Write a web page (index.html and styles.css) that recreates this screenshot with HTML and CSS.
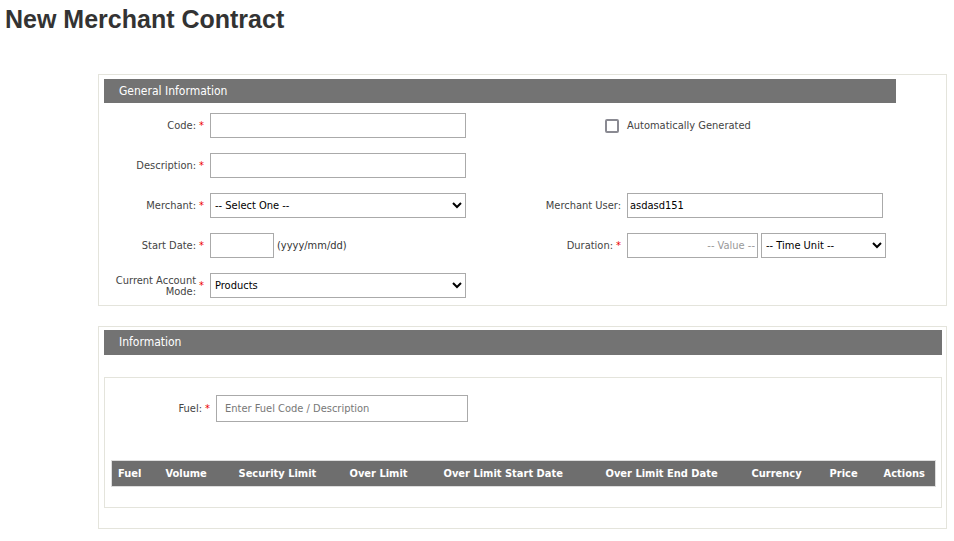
FILE: index.html
```html
<!DOCTYPE html>
<html>
<head>
<meta charset="utf-8">
<title>New Merchant Contract</title>
<link rel="stylesheet" href="styles.css">
</head>
<body>
<h1 class="page-title">New Merchant Contract</h1>
<div class="panels">
  <section class="panel">
    <div class="panel-head panel-head--short">General Information</div>
    <div class="form-grid">
      <label class="lbl">Code: <span class="req">*</span></label>
      <div class="field"><input class="inp inp--wide" type="text"></div>
      <div class="lbl"><span class="chk"></span></div>
      <div class="field"><span class="chk-text">Automatically Generated</span></div>

      <label class="lbl">Description: <span class="req">*</span></label>
      <div class="field"><input class="inp inp--wide" type="text"></div>
      <div class="lbl"></div>
      <div class="field"></div>

      <label class="lbl">Merchant: <span class="req">*</span></label>
      <div class="field"><select class="sel sel--wide"><option>-- Select One --</option></select></div>
      <label class="lbl">Merchant User:</label>
      <div class="field"><input class="inp inp--wide" type="text" value="asdasd151"></div>

      <label class="lbl">Start Date: <span class="req">*</span></label>
      <div class="field"><input class="inp inp--date" type="text"><span class="hint">(yyyy/mm/dd)</span></div>
      <label class="lbl">Duration: <span class="req">*</span></label>
      <div class="field field--duration"><input class="inp inp--value" type="text" placeholder="-- Value --"><select class="sel sel--unit"><option>-- Time Unit --</option></select></div>

      <label class="lbl lbl--two">Current Account Mode: <span class="req">*</span></label>
      <div class="field"><select class="sel sel--wide"><option>Products</option></select></div>
      <div class="lbl"></div>
      <div class="field"></div>
    </div>
  </section>

  <section class="panel panel--info">
    <div class="panel-head">Information</div>
    <div class="inner-box">
      <div class="fuel-row">
        <label class="lbl lbl--fuel">Fuel: <span class="req">*</span></label>
        <input class="inp inp--fuel" type="text" placeholder="Enter Fuel Code / Description">
      </div>
      <table class="grid-table">
        <thead>
          <tr>
            <th class="c-fuel">Fuel</th>
            <th class="c-vol">Volume</th>
            <th class="c-sec">Security Limit</th>
            <th class="c-over">Over Limit</th>
            <th class="c-start">Over Limit Start Date</th>
            <th class="c-end">Over Limit End Date</th>
            <th class="c-cur">Currency</th>
            <th class="c-price">Price</th>
            <th class="c-act">Actions</th>
          </tr>
        </thead>
      </table>
    </div>
  </section>
</div>
</body>
</html>
```
FILE: styles.css
```css
* { box-sizing: border-box; }
body {
  margin: 0;
  background: #fff;
  font-family: "DejaVu Sans Condensed", "DejaVu Sans", sans-serif;
  font-size: 11px;
  color: #333;
}
.page-title {
  margin: 0;
  padding: 5px 5px 0;
  font-family: "Liberation Sans", Arial, sans-serif;
  font-size: 25px;
  font-weight: bold;
  color: #333;
  line-height: 28px;
}
.panels {
  margin: 41px 0 0 98px;
  width: 849px;
}
.panel {
  border: 1px solid #e4e4dc;
  padding: 4px 5px 7px;
}
.panel--info {
  margin-top: 20px;
  padding: 3px 4px 20px 5px;
}
.panel-head {
  height: 25px;
  line-height: 24px;
  background: #737373;
  color: #fff;
  font-size: 12px;
  padding-left: 15px;
}
.panel-head--short { width: 792px; height: 24px; }
.form-grid {
  display: grid;
  grid-template-columns: 100px 256px 149px 260px;
  grid-auto-rows: 25px;
  column-gap: 6px;
  row-gap: 15px;
  margin-top: 10px;
}
.lbl {
  display: flex;
  align-items: center;
  justify-content: flex-end;
  text-align: right;
  color: #444;
  white-space: nowrap;
}
.lbl--two { white-space: normal; line-height: 11px; }
.req { color: #e00; margin-left: 3px; }
.field { display: flex; align-items: center; }
.inp, .sel {
  height: 25px;
  border: 1px solid #aaa;
  font-family: inherit;
  font-size: 11px;
  color: #000;
  padding: 0 2px;
  margin: 0;
  background: #fff;
  outline: none;
  border-radius: 0;
}
.sel { padding: 0; }
.inp--wide, .sel--wide { width: 256px; }
.inp--date { width: 64px; }
.hint { margin-left: 3px; color: #333; }
.field--duration { gap: 3px; }
.inp--value { width: 131px; text-align: right; }
.inp--value::placeholder { color: #999; }
.sel--unit { width: 125px; }
.chk {
  width: 14px;
  height: 14px;
  border: 2px solid #8a8a92;
  border-radius: 2px;
  margin-right: 2px;
}
.chk-text { color: #444; }
.inner-box {
  margin-top: 22px;
  border: 1px solid #e4e4dc;
  padding: 17px 6px 20px;
}
.fuel-row {
  display: flex;
  align-items: center;
  margin-bottom: 38px;
}
.lbl--fuel { width: 99px; margin-right: 6px; }
.inp--fuel { width: 252px; height: 27px; padding-left: 8px; }
.inp--fuel::placeholder { color: #777; }
.grid-table {
  border-collapse: collapse;
  table-layout: fixed;
  width: 824px;
  border: 1px solid #ddd;
}
.grid-table th {
  background: #6e6e6e;
  color: #fff;
  font-weight: bold;
  text-align: left;
  height: 26px;
  padding: 0 0 0 6px;
  white-space: nowrap;
}
.c-fuel { width: 48px; }
.c-vol { width: 73px; }
.c-sec { width: 111px; }
.c-over { width: 94px; }
.c-start { width: 162px; }
.c-end { width: 146px; }
.c-cur { width: 78px; }
.c-price { width: 54px; }
.c-act { width: 58px; }
```
